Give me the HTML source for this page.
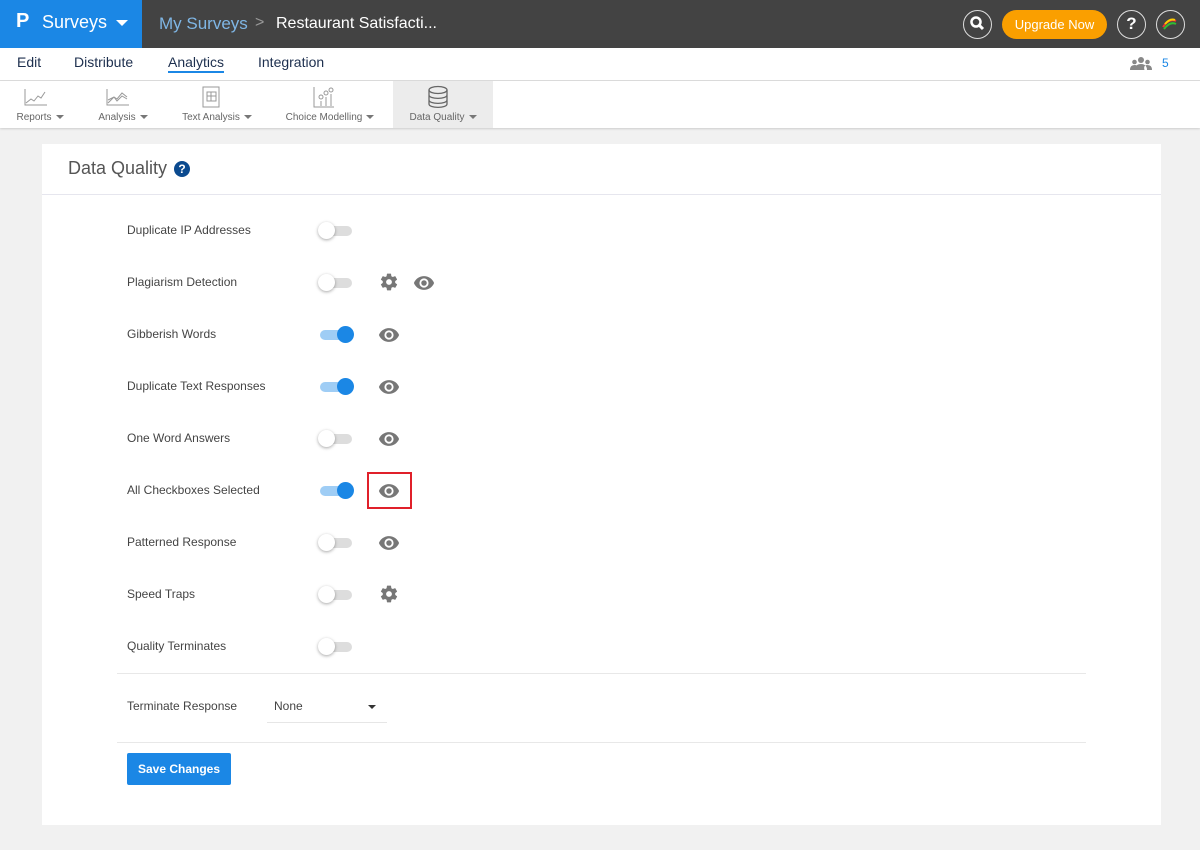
<!DOCTYPE html>
<html><head><meta charset="utf-8"><style>
*{margin:0;padding:0;box-sizing:border-box}
body{width:1200px;height:850px;background:#f1f1f1;font-family:"Liberation Sans",sans-serif;position:relative;overflow:hidden}
.top{position:absolute;left:0;top:0;width:1200px;height:48px;background:#434343}
.brand{position:absolute;left:0;top:0;width:142px;height:48px;background:#1b87e5;color:#fff;font-size:18px}
.abs{position:absolute;white-space:nowrap}
.nav{position:absolute;top:48px;left:0;width:1200px;height:33px;background:#fff;border-bottom:1px solid #ddd}
.nav span{position:absolute;top:6px;font-size:14px;color:#1d2f4e}
.tb{position:absolute;top:81px;left:0;width:1200px;height:47px;background:#fff;box-shadow:0 1px 2px rgba(0,0,0,.15)}
.tb .it{position:absolute;top:0;height:47px;font-size:10px;color:#666;text-align:center}
.tb .it .l{position:absolute;top:31px;left:0;right:0;white-space:nowrap}
.card{position:absolute;left:42px;top:144px;width:1119px;height:681px;background:#fff}
.row{position:absolute;left:85px;font-size:12px;color:#444;white-space:nowrap}
.tg{position:absolute;left:278px;width:32px;height:10px;border-radius:5px;background:#ddd}
.tg i{position:absolute;top:-4px;left:-2px;width:17px;height:17px;border-radius:50%;background:#fff;box-shadow:0 1px 3px rgba(0,0,0,.35)}
.tg.on{background:#9fcdf5}
.tg.on i{left:17px;background:#1b87e5;box-shadow:none}
.ic{position:absolute}
.car{display:inline-block;border-left:4px solid transparent;border-right:4px solid transparent;border-top:4px solid #777;vertical-align:middle;margin-left:4px}
</style></head><body>
<div class="top"></div>
<div class="brand"><span class="abs" style="left:16px;top:10px;font-weight:bold;font-size:20px">P</span><span class="abs" style="left:42px;top:12px">Surveys</span><span class="abs" style="left:116px;top:20px;border-left:6px solid transparent;border-right:6px solid transparent;border-top:6px solid #fff"></span></div>
<span class="abs" style="left:159px;top:14px;color:#7fb6e5;font-size:17px">My Surveys</span>
<span class="abs" style="left:255px;top:14px;color:#999;font-size:16px">&gt;</span>
<span class="abs" style="left:276px;top:15px;color:#fff;font-size:16px">Restaurant Satisfacti...</span>
<div class="abs" style="left:963px;top:10px;width:29px;height:29px;border:1.5px solid #ddd;border-radius:50%"><svg width="26" height="26" viewBox="0 0 26 26"><circle cx="12" cy="11" r="4.5" stroke="#fff" stroke-width="2.5" fill="none"/><path d="M15 14l4 4" stroke="#fff" stroke-width="3"/></svg></div>
<div class="abs" style="left:1002px;top:10px;width:105px;height:29px;background:#fa9f00;border-radius:15px;color:#fff;font-size:13px;text-align:center;line-height:29px">Upgrade Now</div>
<div class="abs" style="left:1117px;top:10px;width:29px;height:29px;border:1.5px solid #ddd;border-radius:50%;color:#fff;font-weight:bold;font-size:17px;text-align:center;line-height:26px">?</div>
<div class="abs" style="left:1156px;top:10px;width:29px;height:29px;border:1.5px solid #ddd;border-radius:50%"><svg width="26" height="26"><path d="M6 16q6-9 13-6" stroke="#e33" stroke-width="2" fill="none"/><path d="M7 18q6-8 12-5" stroke="#3b3" stroke-width="2" fill="none"/><path d="M8 13q5-6 10-4" stroke="#fc0" stroke-width="2" fill="none"/></svg></div>
<div class="nav"><span style="left:17px">Edit</span><span style="left:74px">Distribute</span><span style="left:168px;border-bottom:2px solid #1b87e5;padding-bottom:1px">Analytics</span><span style="left:258px">Integration</span>
<svg class="abs" style="left:1130px;top:8px" width="22" height="14"><circle cx="11" cy="4" r="3" fill="#888"/><circle cx="4.5" cy="6" r="2.3" fill="#888"/><circle cx="17.5" cy="6" r="2.3" fill="#888"/><path d="M5 14q0-6 6-6t6 6z M0 14q0-5 4.5-5t3 5z M22 14q0-5-4.5-5t-3 5z" fill="#888"/></svg>
<span style="left:1162px;top:8px;font-size:12px;color:#1b87e5">5</span></div>
<div class="tb">
<div class="it" style="left:10px;width:60px"><svg class="abs" style="left:13px;top:6px" width="24" height="20"><path d="M2 2v16h22M3 16l5-4 3 2 4-5 3 2 4-6" stroke="#999" fill="none"/></svg><div class="l">Reports<span class="car"></span></div></div>
<div class="it" style="left:92px;width:62px"><svg class="abs" style="left:13px;top:6px" width="24" height="20"><path d="M2 2v16h22M3 16l6-6 3 2 5-6 5 4M3 13l6-3 3 4 5-5 5 3" stroke="#999" fill="none"/></svg><div class="l">Analysis<span class="car"></span></div></div>
<div class="it" style="left:176px;width:82px"><svg class="abs" style="left:25px;top:4px" width="22" height="24"><rect x="2" y="2" width="16" height="20" stroke="#999" fill="none"/><rect x="6" y="7" width="9" height="9" stroke="#999" fill="none"/><path d="M10 7v9M6 11h9" stroke="#999"/></svg><div class="l">Text Analysis<span class="car"></span></div></div>
<div class="it" style="left:280px;width:100px"><svg class="abs" style="left:32px;top:4px" width="24" height="24"><path d="M2 2v20h20" stroke="#999" fill="none"/><circle cx="9" cy="12" r="2" stroke="#999" fill="none"/><circle cx="14" cy="8" r="2" stroke="#999" fill="none"/><circle cx="19" cy="5" r="2" stroke="#999" fill="none"/><path d="M9 16v5M14 12v9M19 9v12" stroke="#999"/></svg><div class="l">Choice Modelling<span class="car"></span></div></div>
<div class="it" style="left:393px;width:100px;background:#ececec"><svg class="abs" style="left:34px;top:4px" width="22" height="24"><ellipse cx="11" cy="5" rx="9" ry="3.5" stroke="#666" stroke-width="1.3" fill="none"/><path d="M2 5v14c0 4.5 18 4.5 18 0V5M2 10c0 4.5 18 4.5 18 0M2 15c0 4.5 18 4.5 18 0" stroke="#666" stroke-width="1.3" fill="none"/></svg><div class="l">Data Quality<span class="car"></span></div></div>
</div>
<div class="card">
<div class="abs" style="left:26px;top:14px;font-size:18px;color:#555">Data Quality</div>
<div class="abs" style="left:132px;top:17px;width:16px;height:16px;border-radius:50%;background:#0b4a8f;color:#fff;font-weight:bold;font-size:12px;text-align:center;line-height:16px">?</div>
<div class="abs" style="left:0;top:50px;width:1119px;border-top:1px solid #e6e6ee"></div>
<div class="abs" style="left:75px;top:529px;width:969px;border-top:1px solid #e8e8e8"></div>
<div class="abs" style="left:75px;top:598px;width:969px;border-top:1px solid #e8e8e8"></div>
<div class="row" style="top:555px">Terminate Response</div>
<div class="abs" style="left:232px;top:555px;font-size:12px;color:#444">None</div>
<div class="abs" style="left:326px;top:561px;border-left:4px solid transparent;border-right:4px solid transparent;border-top:4px solid #333"></div>
<div class="abs" style="left:225px;top:578px;width:120px;border-top:1px solid #e6e6e6"></div>
<div class="abs" style="left:85px;top:609px;width:104px;height:32px;background:#1b87e5;border-radius:2px;color:#fff;font-size:12px;font-weight:bold;text-align:center;line-height:32px">Save Changes</div>
<div class="abs" style="left:325px;top:328px;width:45px;height:37px;border:2px solid #e0202a"></div>
</div>
<svg width="0" height="0" style="position:absolute"><defs>
<symbol id="eye" viewBox="0 0 24 24"><path d="M12 4.5C7 4.5 2.7 7.6 1 12c1.7 4.4 6 7.5 11 7.5s9.3-3.1 11-7.5c-1.7-4.4-6-7.5-11-7.5zM12 17a5 5 0 110-10 5 5 0 010 10zm0-8a3 3 0 100 6 3 3 0 000-6z" fill="#777"/></symbol>
<symbol id="gear" viewBox="0 0 24 24"><path d="M19.4 13c.04-.3.06-.66.06-1s-.02-.7-.06-1l2.1-1.650c.2-.15.25-.42.12-.64l-2-3.46c-.12-.22-.39-.3-.61-.22l-2.49 1c-.52-.4-1.080-.73-1.690-.98l-.38-2.65A.49.49 0 0014 2h-4c-.25 0-.46.18-.49.42l-.38 2.65c-.61.25-1.170.59-1.690.98l-2.490-1c-.23-.09-.49 0-.61.22l-2 3.46c-.13.22-.07.49.12.64L4.57 11c-.04.32-.07.65-.07 1s.03.68.07 1l-2.110 1.650c-.19.15-.24.42-.12.64l2 3.46c.12.22.39.3.61.22l2.490-1c.52.4 1.080.73 1.690.98l.38 2.65c.03.24.24.42.49.42h4c.25 0 .46-.18.49-.42l.38-2.65c.61-.25 1.170-.59 1.690-.98l2.490 1c.23.09.49 0 .61-.22l2-3.46c.12-.22.07-.49-.12-.64L19.4 13zM12 15.5a3.5 3.5 0 110-7 3.5 3.5 0 010 7z" fill="#777"/></symbol></defs></svg>
<div style="position:absolute;left:42px;top:144px;width:1119px;height:600px">
<div class="row" style="top:79px">Duplicate IP Addresses</div><div class="tg" style="top:82px"><i></i></div>
<div class="row" style="top:131px">Plagiarism Detection</div><div class="tg" style="top:134px"><i></i></div>
<svg class="ic" style="left:337px;top:128px" width="20" height="20"><use href="#gear"/></svg><svg class="ic" style="left:371px;top:128px" width="22" height="22"><use href="#eye"/></svg>
<div class="row" style="top:183px">Gibberish Words</div><div class="tg on" style="top:186px"><i></i></div>
<svg class="ic" style="left:336px;top:180px" width="22" height="22"><use href="#eye"/></svg>
<div class="row" style="top:235px">Duplicate Text Responses</div><div class="tg on" style="top:238px"><i></i></div>
<svg class="ic" style="left:336px;top:232px" width="22" height="22"><use href="#eye"/></svg>
<div class="row" style="top:287px">One Word Answers</div><div class="tg" style="top:290px"><i></i></div>
<svg class="ic" style="left:336px;top:284px" width="22" height="22"><use href="#eye"/></svg>
<div class="row" style="top:339px">All Checkboxes Selected</div><div class="tg on" style="top:342px"><i></i></div>
<svg class="ic" style="left:336px;top:336px" width="22" height="22"><use href="#eye"/></svg>
<div class="row" style="top:391px">Patterned Response</div><div class="tg" style="top:394px"><i></i></div>
<svg class="ic" style="left:336px;top:388px" width="22" height="22"><use href="#eye"/></svg>
<div class="row" style="top:443px">Speed Traps</div><div class="tg" style="top:446px"><i></i></div>
<svg class="ic" style="left:337px;top:440px" width="20" height="20"><use href="#gear"/></svg>
<div class="row" style="top:495px">Quality Terminates</div><div class="tg" style="top:498px"><i></i></div>
</div>
</body></html>
